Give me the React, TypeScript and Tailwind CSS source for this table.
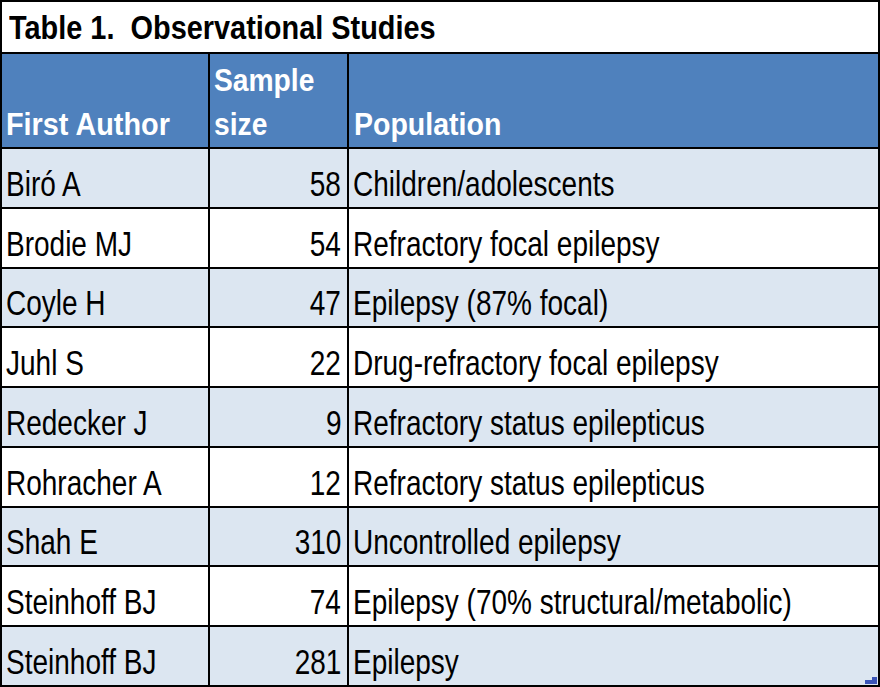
import React from "react";

const rows: [string, string, string][] = [
  ["Biró A", "58", "Children/adolescents"],
  ["Brodie MJ", "54", "Refractory focal epilepsy"],
  ["Coyle H", "47", "Epilepsy (87% focal)"],
  ["Juhl S", "22", "Drug-refractory focal epilepsy"],
  ["Redecker J", "9", "Refractory status epilepticus"],
  ["Rohracher A", "12", "Refractory status epilepticus"],
  ["Shah E", "310", "Uncontrolled epilepsy"],
  ["Steinhoff BJ", "74", "Epilepsy (70% structural/metabolic)"],
  ["Steinhoff BJ", "281", "Epilepsy"],
];

export default function App() {
  return (
    <div className="relative w-[880px] h-[687px] bg-black p-[2px] font-['Liberation_Sans',Arial,sans-serif] text-black">
      <div className="grid h-full grid-cols-[206px_137px_minmax(0,1fr)] grid-rows-[50px_93px_repeat(9,minmax(0,1fr))] gap-[2px]">
        <div className="col-span-3 flex items-end overflow-hidden whitespace-nowrap bg-white pl-[7px] pb-[8px] text-[34px] font-bold leading-none">
          <span className="inline-block origin-left scale-x-[0.85]">Table 1.&nbsp; Observational Studies</span>
        </div>
        <div className="flex items-end overflow-hidden whitespace-nowrap bg-[#4f81bd] pl-[4px] text-[31px] font-bold leading-[44px] text-white">
          <span className="inline-block origin-left scale-x-[0.93]">First Author</span>
        </div>
        <div className="flex items-end overflow-hidden whitespace-nowrap bg-[#4f81bd] pl-[4px] text-[31px] font-bold leading-[44px] text-white">
          <span className="inline-block origin-left scale-x-[0.91]">
            Sample
            <br />
            size
          </span>
        </div>
        <div className="flex items-end overflow-hidden whitespace-nowrap bg-[#4f81bd] pl-[5px] text-[31px] font-bold leading-[44px] text-white">
          <span className="inline-block origin-left scale-x-[0.92]">Population</span>
        </div>
        {rows.map((r, i) => {
          const bg = i % 2 === 0 ? "bg-[#dce6f1]" : "bg-white";
          return (
            <React.Fragment key={i}>
              <div className={`flex items-end overflow-hidden whitespace-nowrap ${bg} pl-[4px] pb-[6px] text-[35px] leading-none`}>
                <span className="inline-block origin-left scale-x-[0.8]">{r[0]}</span>
              </div>
              <div className={`flex items-end justify-end overflow-hidden whitespace-nowrap ${bg} pr-[6px] pb-[6px] text-[35px] leading-none`}>
                <span className="inline-block origin-right scale-x-[0.8]">{r[1]}</span>
              </div>
              <div className={`flex items-end overflow-hidden whitespace-nowrap ${bg} pl-[4px] pb-[6px] text-[35px] leading-none`}>
                <span className="inline-block origin-left scale-x-[0.8]">{r[2]}</span>
              </div>
            </React.Fragment>
          );
        })}
      </div>
      <svg className="absolute right-[3px] bottom-[3px]" width="12" height="7" viewBox="0 0 12 7">
        <path d="M7 0H12V7H0V3H7Z" fill="#3b55b8" />
      </svg>
    </div>
  );
}
